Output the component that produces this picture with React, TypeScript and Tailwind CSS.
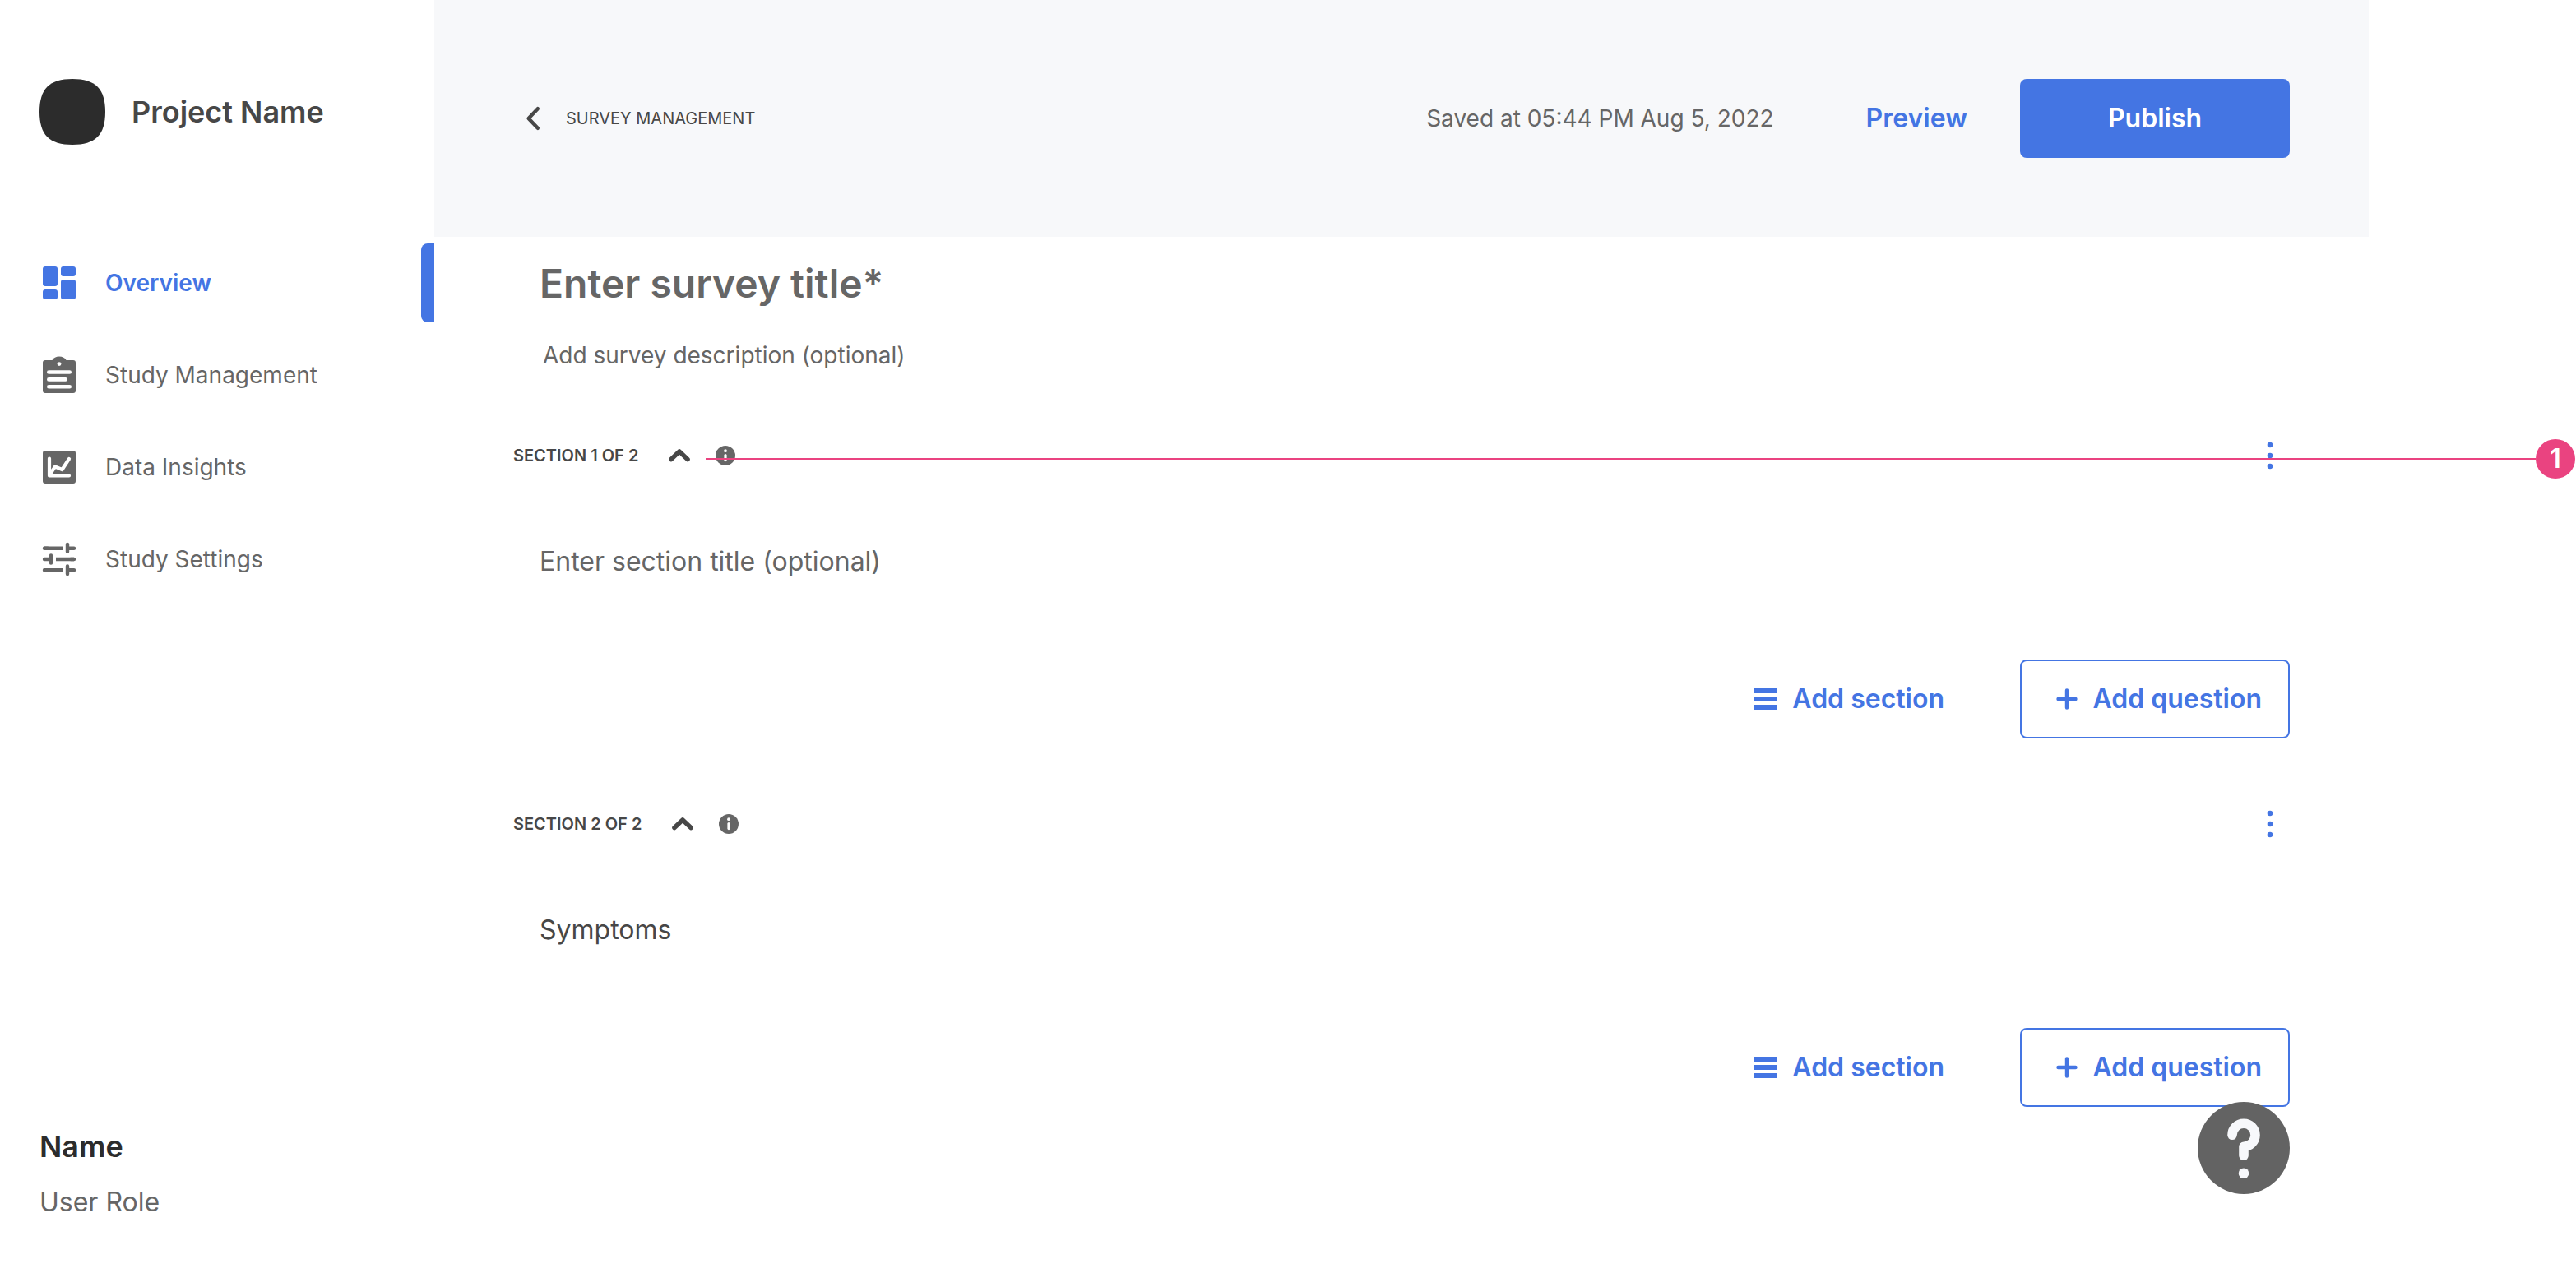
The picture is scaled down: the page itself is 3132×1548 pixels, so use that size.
import { useState } from "react";
import type { ReactNode } from "react";

function OverviewIcon() {
  return (
    <svg viewBox="0 0 48 48" className="size-12 shrink-0" fill="currentColor" aria-hidden="true">
      <rect x="4" y="4" width="18" height="24" rx="3" />
      <rect x="26" y="4" width="18" height="12" rx="3" />
      <rect x="4" y="32" width="18" height="12" rx="3" />
      <rect x="26" y="20" width="18" height="24" rx="3" />
    </svg>
  );
}

function ClipboardIcon() {
  return (
    <svg viewBox="0 0 48 48" className="size-12 shrink-0" aria-hidden="true">
      <path
        fill="currentColor"
        d="M7 6H15.5C17 3.2 20.2 1.6 24 1.6S31 3.2 32.5 6H41A3 3 0 0 1 44 9V43A3 3 0 0 1 41 46H7A3 3 0 0 1 4 43V9A3 3 0 0 1 7 6Z"
      />
      <circle cx="24" cy="10.6" r="2.4" fill="#fff" />
      <path d="M11.3 20.5H36.7M11.3 29.4H31.7M11.3 38.3H36.7" stroke="#fff" strokeWidth="4.6" strokeLinecap="round" />
    </svg>
  );
}

function InsightsIcon() {
  return (
    <svg viewBox="0 0 48 48" className="size-12 shrink-0" aria-hidden="true">
      <rect x="4" y="4" width="40" height="40" rx="3" fill="currentColor" />
      <path
        d="M12 13.5V34.5H36M12.5 33L19 23.5L27.5 27L36 14"
        fill="none"
        stroke="#fff"
        strokeWidth="4.2"
        strokeLinecap="round"
        strokeLinejoin="round"
      />
    </svg>
  );
}

function TuneIcon() {
  return (
    <svg viewBox="0 0 48 48" className="size-12 shrink-0" fill="none" stroke="currentColor" strokeWidth="4.4" aria-hidden="true">
      <path d="M28 10.7H6M20 24H42M28 37.3H6" strokeLinecap="butt" />
      <path d="M34 10.7H42M34 5.9V14.9M6 24H14M14 19.5V28.5M34 37.3H42M34 32.5V42M6 10.7H10M6 37.3H10M38 24H42" strokeLinecap="round" />
    </svg>
  );
}

function ListIcon() {
  return (
    <svg viewBox="0 0 28 26" className="h-[26px] w-7" fill="currentColor" aria-hidden="true">
      <path d="M0 0H28V6H0ZM0 10H28V16H0ZM0 20H28V26H0Z" />
    </svg>
  );
}

function PlusIcon() {
  return (
    <svg viewBox="0 0 26 26" className="size-[26px]" fill="none" stroke="currentColor" strokeWidth="4.4" strokeLinecap="round" aria-hidden="true">
      <path d="M13 2.5V23.5M2.5 13H23.5" />
    </svg>
  );
}

type NavItem = { label: string; icon: ReactNode };

const navItems: NavItem[] = [
  { label: "Overview", icon: <OverviewIcon /> },
  { label: "Study Management", icon: <ClipboardIcon /> },
  { label: "Data Insights", icon: <InsightsIcon /> },
  { label: "Study Settings", icon: <TuneIcon /> },
];

function Sidebar() {
  return (
    <aside className="flex w-[528px] shrink-0 flex-col pt-24 pb-[62px]">
      <div className="flex h-20 items-center gap-8 pl-12">
        <svg viewBox="0 0 80 80" className="size-20 shrink-0" aria-hidden="true">
          <path fill="#2c2c2c" d="M0 40C0 12 12 0 40 0S80 12 80 40 68 80 40 80 0 68 0 40Z" />
        </svg>
        <span className="text-4xl font-semibold text-[#474747]">Project Name</span>
      </div>
      <nav className="mt-[120px] flex flex-col gap-4">
        {navItems.map((item, i) => (
          <a
            key={item.label}
            href="#"
            aria-current={i === 0 ? "page" : undefined}
            className={
              i === 0
                ? "flex h-24 items-center gap-8 pl-12 text-[28px] font-semibold text-[#4475e3]"
                : "flex h-24 items-center gap-8 pl-12 text-[28px] text-[#666666]"
            }
          >
            {item.icon}
            <span>{item.label}</span>
            {i === 0 && <span className="ml-auto h-24 w-4 rounded-l-lg bg-[#4475e3]" />}
          </a>
        ))}
      </nav>
      <div className="mt-auto flex flex-col gap-5 pl-12">
        <p className="text-4xl leading-[48px] font-semibold text-[#2c2c2c]">Name</p>
        <p className="text-[32px] leading-[48px] text-[#666666]">User Role</p>
      </div>
    </aside>
  );
}

function Header() {
  return (
    <header className="flex h-72 items-center justify-between bg-[#f7f8fa] px-24">
      <button type="button" className="flex items-center text-xl text-[#474747]">
        <svg
          viewBox="0 0 48 48"
          className="mr-4 size-12"
          fill="none"
          stroke="currentColor"
          strokeWidth="4.4"
          strokeLinecap="round"
          strokeLinejoin="round"
          aria-hidden="true"
        >
          <path d="M29.8 12.2L18.6 24L29.8 35.8" />
        </svg>
        SURVEY MANAGEMENT
      </button>
      <div className="flex items-center">
        <span className="text-[28px] text-[#666666]">Saved at 05:44 PM Aug 5, 2022</span>
        <button type="button" className="ml-20 h-24 px-8 text-[32px] font-semibold text-[#4475e3]">
          Preview
        </button>
        <button type="button" className="ml-8 h-24 w-[328px] rounded-lg bg-[#4475e3] text-[32px] font-semibold text-white">
          Publish
        </button>
      </div>
    </header>
  );
}

function Annotation({ label }: { label: string }) {
  return (
    <div className="pointer-events-none absolute top-3 -right-[347px] left-[234px] flex items-center">
      <div className="h-0.5 grow bg-[#ea4380]" />
      <div className="flex size-12 shrink-0 items-center justify-center rounded-full bg-[#ea4380] text-[32px] font-semibold text-white">
        {label}
      </div>
    </div>
  );
}

type SectionProps = { index: number; total: number; title?: string; note?: string };

function Section({ index, total, title = "", note }: SectionProps) {
  const [value, setValue] = useState(title);
  return (
    <section className="flex flex-col">
      <div className="relative flex h-16 items-center">
        <h2 className="text-xl font-semibold text-[#474747]">
          SECTION {index} OF {total}
        </h2>
        <button type="button" aria-label="Collapse section" className="ml-[26px] text-[#474747]">
          <svg
            viewBox="0 0 48 48"
            className="size-12"
            fill="none"
            stroke="currentColor"
            strokeWidth="5.6"
            strokeLinecap="round"
            strokeLinejoin="round"
            aria-hidden="true"
          >
            <path d="M14 28.5L24 19L34 28.5" />
          </svg>
        </button>
        <button type="button" aria-label="Section information" className="ml-2 text-[#666666]">
          <svg viewBox="0 0 48 48" className="size-12" aria-hidden="true">
            <circle cx="24" cy="24" r="12" fill="currentColor" />
            <circle cx="24" cy="18.2" r="1.9" fill="#fff" />
            <path d="M24 23.6V29.6" stroke="#fff" strokeWidth="3.2" strokeLinecap="round" />
          </svg>
        </button>
        <button type="button" aria-label="Section options" className="ml-auto text-[#4475e3]">
          <svg viewBox="0 0 48 48" className="size-12" fill="currentColor" aria-hidden="true">
            <circle cx="24" cy="11" r="3.3" />
            <circle cx="24" cy="24" r="3.3" />
            <circle cx="24" cy="37" r="3.3" />
          </svg>
        </button>
        {note && <Annotation label={note} />}
      </div>
      <input
        type="text"
        aria-label={"Section " + index + " title"}
        placeholder="Enter section title (optional)"
        value={value}
        onChange={(e) => setValue(e.target.value)}
        className="mt-16 h-16 px-8 text-[32px] text-[#474747] outline-none placeholder:text-[#666666]"
      />
      <div className="mt-[88px] flex justify-end text-[32px] font-semibold text-[#4475e3]">
        <button type="button" className="mr-[60px] flex h-24 items-center gap-[18px] px-8">
          <ListIcon />
          Add section
        </button>
        <button
          type="button"
          className="flex h-24 w-[328px] items-center justify-end gap-[18px] rounded-lg border-2 border-[#4475e3] pr-8"
        >
          <PlusIcon />
          Add question
        </button>
      </div>
    </section>
  );
}

export default function App() {
  return (
    <div className="flex min-h-screen overflow-x-hidden bg-white font-['Inter',sans-serif] leading-normal">
      <Sidebar />
      <main className="mr-[252px] min-w-0 grow">
        <Header />
        <div className="flex flex-col px-24 pt-6">
          <input
            type="text"
            aria-label="Survey title"
            placeholder="Enter survey title*"
            className="h-16 px-8 text-5xl font-semibold text-[#474747] outline-none placeholder:text-[#666666]"
          />
          <input
            type="text"
            aria-label="Survey description"
            placeholder="Add survey description (optional)"
            className="mt-8 h-12 px-9 text-[28px] text-[#474747] outline-none placeholder:text-[#666666]"
          />
          <div className="mt-[66px] flex flex-col gap-[72px]">
            <Section index={1} total={2} note="1" />
            <Section index={2} total={2} title="Symptoms" />
          </div>
        </div>
      </main>
      <button type="button" aria-label="Help" className="fixed right-[348px] bottom-24 size-28 rounded-full bg-[#636363]">
        <svg viewBox="0 0 112 112" className="size-28" fill="none" aria-hidden="true">
          <path
            d="M42 40.3C42 32.5 48.2 26.3 56 26.3S70 32.5 70 40.3S63.8 54.3 56 54.3V65.3"
            stroke="#f7f8fb"
            strokeWidth="11.6"
            strokeLinecap="round"
            strokeLinejoin="round"
          />
          <circle cx="56" cy="86.8" r="6.3" fill="#f7f8fb" />
        </svg>
      </button>
    </div>
  );
}
